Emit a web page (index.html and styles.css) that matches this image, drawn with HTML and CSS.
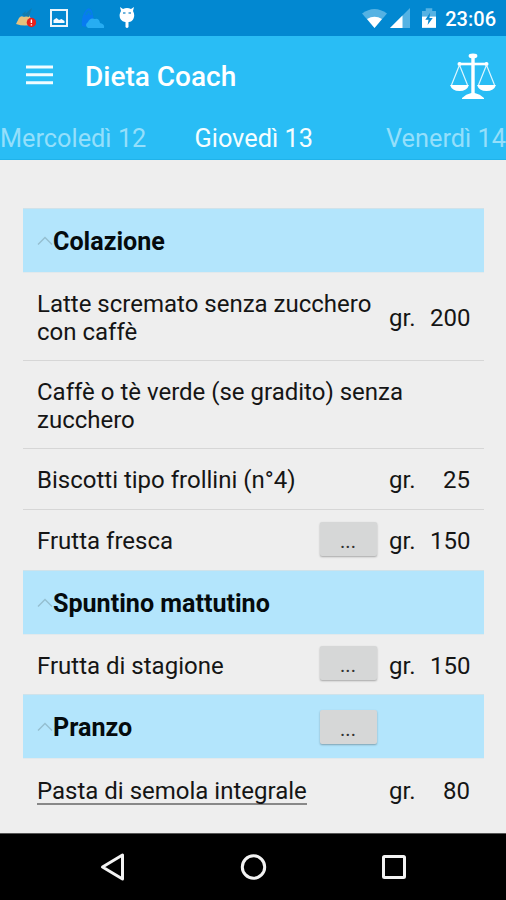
FILE: index.html
```html
<!DOCTYPE html>
<html lang="it">
<head>
<meta charset="utf-8">
<title>Dieta Coach</title>
<link rel="stylesheet" href="styles.css">
</head>
<body>
<div class="screen">
  <div class="status">
    <div class="notifications">
      <svg width="20" height="20" viewBox="0 0 20 20"><path d="M0 16 3 10Q5 7 8 9L13 7 18 16Q9 19 0 16Z" fill="#e5c17d"/><path d="M6 6 10 3 9 6 16 0 13 9 8 8Z" fill="#147bab"/><circle cx="15.4" cy="14.5" r="4.7" fill="#e8201b"/><path d="M15.4 11.5v3.6M15.4 16.2v1.3" stroke="#fff" stroke-width="1.4"/></svg>
      <svg width="18" height="18" viewBox="0 0 18 18"><rect x="1" y="1" width="16" height="16" fill="none" stroke="#e9f5fc" stroke-width="2"/><path d="M3.5 14V11L6.5 9 9 11 11.5 10 14.5 12v2Z" fill="#f4faff"/></svg>
      <svg width="24" height="22" viewBox="0 0 24 22"><path d="M1 19Q0 9 5 3Q8-1 11 4L13 13 5 20Z" fill="#087bf0"/><path d="M5 8Q8 1 10 8" fill="none" stroke="#0586d8" stroke-width="2"/><path d="M7 21Q3 18 7 15Q9 10 14 12Q18 11 19 16Q24 17 23 21Z" fill="#27adf2"/></svg>
      <svg width="16" height="24" viewBox="0 0 16 24"><path d="M1 1 4 3Q8 1 12 3L15 1 14 5C17 10 14 16 10 16H9.5V21Q8 23 6.5 21V16H6C1 15-1 10 2 5Z" fill="#fff"/><path d="M4 7h2.5M9.5 7h2.5" stroke="#3d9bd2" stroke-width="1.5"/></svg>
    </div>
    <div class="system">
      <svg class="wifi" width="25" height="19" viewBox="0 0 25 19"><path d="M0 4.5Q12.5-4.5 25 4.5L12.5 19Z" fill="#55b2e3"/><path d="M5 10Q12.5 5.5 20 10L12.5 19Z" fill="#fff"/></svg>
      <svg class="signal" width="20" height="20" viewBox="0 0 20 20"><path d="M0 20 20 0V20Z" fill="#55b2e3"/><path d="M0 20 12.5 7.5V20Z" fill="#fff"/></svg>
      <svg class="battery" width="14" height="20" viewBox="0 0 15 21"><path d="M0 3H4V0H11V3H15V21H0Z" fill="#55b2e3"/><path d="M0 9H15V21H0Z" fill="#fff"/><path d="M8.7 5 3.5 12.5H7L6 18 11.5 10.5H8Z" fill="#0788cf"/></svg>
      <span class="clock">23:06</span>
    </div>
  </div>
  <header class="appbar">
    <div class="toolbar">
      <svg class="menu" width="27" height="20" viewBox="0 0 27 20"><path d="M0 2H27M0 9.8H27M0 17.7H27" stroke="#f2fcff" stroke-width="3"/></svg>
      <h1 class="title">Dieta Coach</h1>
      <svg class="scales" width="46" height="47" viewBox="0 0 46 47"><path d="M21.3 5H24.7V40Q30 41 34 45V46H12V45Q16 41 21.3 40Z" fill="#fff"/><ellipse cx="23" cy="3" rx="4.4" ry="2.4" fill="#fff"/><path d="M9 11H37" stroke="#fff" stroke-width="2.6"/><circle cx="9.5" cy="11" r="2" fill="#fff"/><circle cx="36.5" cy="11" r="2" fill="#fff"/><path d="M9.5 12 1.5 32M9.5 12 17.5 32M36.5 12 28.5 32M36.5 12 44.5 32" stroke="#dcf6ff" stroke-width="1.2"/><path d="M0 32H19Q17 38 9.5 38T0 32ZM27 32H46Q44 38 36.5 38T27 32Z" fill="#fff"/></svg>
    </div>
    <nav class="tabs"><span class="tab prev">Mercoledì 12</span><span class="tab active">Giovedì 13</span><span class="tab next">Venerdì 14</span></nav>
  </header>
  <main class="plan">
    <div class="head"><svg class="chev" width="16" height="10" viewBox="0 0 16 10"><path d="M1 8.5 8 1.5 15 8.5"/></svg><h2>Colazione</h2></div>
    <div class="row tall"><span class="food">Latte scremato senza zucchero<br>con caffè</span><span class="unit">gr.</span><span class="qty">200</span></div>
    <div class="row tall second"><span class="food">Caffè o tè verde (se gradito) senza<br>zucchero</span></div>
    <div class="row"><span class="food">Biscotti tipo frollini (n°4)</span><span class="unit">gr.</span><span class="qty">25</span></div>
    <div class="row"><span class="food">Frutta fresca</span><button class="more">...</button><span class="unit">gr.</span><span class="qty">150</span></div>
    <div class="head"><svg class="chev" width="16" height="10" viewBox="0 0 16 10"><path d="M1 8.5 8 1.5 15 8.5"/></svg><h2>Spuntino mattutino</h2></div>
    <div class="row short"><span class="food">Frutta di stagione</span><button class="more">...</button><span class="unit">gr.</span><span class="qty">150</span></div>
    <div class="head"><svg class="chev" width="16" height="10" viewBox="0 0 16 10"><path d="M1 8.5 8 1.5 15 8.5"/></svg><h2>Pranzo</h2><button class="more">...</button></div>
    <div class="row last"><span class="food"><span class="link">Pasta di semola integrale</span></span><span class="unit">gr.</span><span class="qty">80</span></div>
  </main>
  <footer class="navbar">
    <svg width="28" height="30" viewBox="0 0 28 30"><path d="M23.5 3V27L3.5 15Z"/></svg>
    <svg width="28" height="30" viewBox="0 0 28 30"><circle cx="14.5" cy="15" r="11.2"/></svg>
    <svg width="28" height="30" viewBox="0 0 28 30"><rect x="3.5" y="4.5" width="21" height="21" rx="1"/></svg>
  </footer>
</div>
</body>
</html>
```
FILE: styles.css
```css
* { box-sizing: border-box; }
body { margin: 0; font-family: Roboto, "Liberation Sans", sans-serif; }
svg { display: block; flex: none; }
h1, h2 { margin: 0; }
.screen { width: 506px; height: 900px; display: flex; flex-direction: column; overflow: hidden; background: #eee; }
.status { height: 36px; flex: none; display: flex; justify-content: space-between; align-items: center; padding: 0 10px 0 16px; background: #0288d1; }
.notifications { display: flex; align-items: center; gap: 14px; }
.notifications svg:nth-child(3) { margin-left: -1px; }
.system { display: flex; align-items: center; color: #fff; }
.wifi { margin-right: 3px; }
.signal { margin-right: 12px; }
.battery { margin-right: 9px; }
.clock { font-size: 20px; font-weight: 500; line-height: 36px; padding-top: 2px; }
.appbar { height: 124px; flex: none; background: #29bdf5; border-bottom: 1px solid #20b3ea; }
.toolbar { height: 80px; display: flex; align-items: center; padding: 0 10px 0 26px; color: #fff; }
.menu { margin-right: 32px; margin-top: -2px; }
.title { flex: 1; font-size: 28px; font-weight: 500; line-height: 32px; padding-top: 1px; }
.tabs { height: 43px; display: flex; font-size: 25.3px; line-height: 45px; white-space: nowrap; }
.tab { color: #94dffb; }
.tab.prev { width: 194.5px; }
.tab.active { flex: 1; color: #f4fdff; }
.plan { flex: 1; padding: 48px 22px 0 23px; color: #151515; font-size: 24px; }
.head { height: 64px; display: flex; align-items: center; padding: 0 14px; background: #b3e5fc; border-top: 1px solid #cfe2ea; }
.head h2 { flex: 1; font-size: 25.1px; font-weight: 700; color: #050b0d; line-height: 28px; padding-top: 2px; }
.head .more { margin-right: 93.5px; }
.chev { fill: none; stroke: #94bfd0; stroke-width: 1.4; }
.row { height: 61px; display: flex; align-items: center; padding: 2px 14px 0; line-height: 28px; border-top: 1px solid #d6d6d6; white-space: nowrap; }
.head + .row { border-top-color: #e2e9ec; }
.row.tall { height: 88px; }
.row.second { padding-top: 3px; }
.row.short { height: 60px; }
.row.last { height: 62px; }
.food { flex: 1; }
.unit { width: 41px; }
.qty { width: 40px; text-align: right; }
.link { border-bottom: 2px solid #888; display: inline-block; line-height: 24px; }
.more { width: 57px; height: 34px; margin: 0 12.5px 0 0; padding: 5px 0 0; border: 0; border-radius: 2px; background: #d6d7d7; box-shadow: 0 1px 2px rgba(0,0,0,.3); font: 20px/27px Roboto, sans-serif; color: #333; }
.row .more { margin-bottom: 5px; }
.navbar { height: 67px; flex: none; background: #000; border-top: 1px solid #555; display: flex; align-items: center; justify-content: center; gap: 112.5px; }
.navbar svg { fill: none; stroke: #f3f3f3; stroke-width: 3; stroke-linejoin: round; }
```
